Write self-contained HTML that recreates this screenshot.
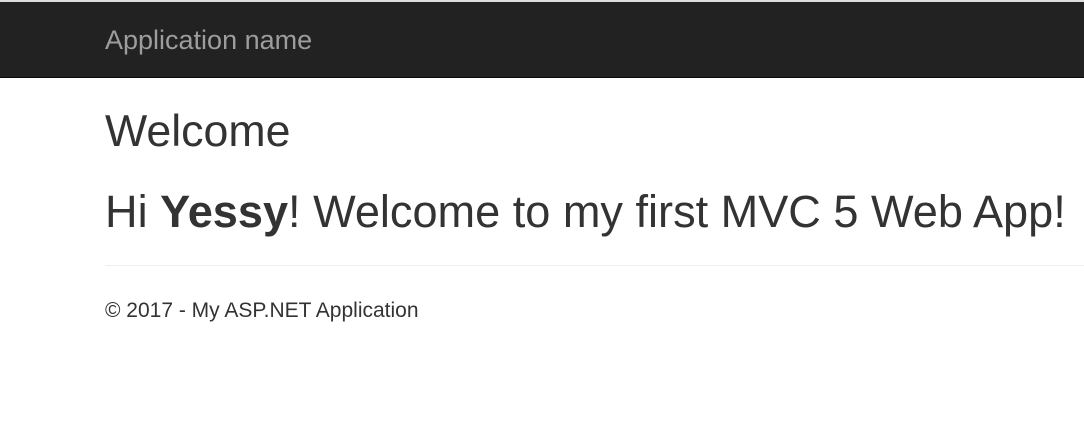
<!DOCTYPE html>
<html><head><style>
body{margin:0;background:#fff;font-family:"Liberation Sans",Arial,sans-serif;color:#333;width:1084px;height:425px;overflow:hidden;position:relative}
.top{position:absolute;left:0;top:0;width:1084px;height:2px;background:#ddd}
.nav{position:absolute;left:0;top:2px;width:1084px;height:75px;background:#222;border-bottom:1px solid #080808}
.brand{position:absolute;left:105px;top:22px;font-size:27px;line-height:32px;color:#9d9d9d}
.t{position:absolute;left:105px;white-space:nowrap}
.h2{top:107px;font-size:44.7px;line-height:50px}
.h1{top:184px;font-size:45.1px;line-height:56px}
hr{position:absolute;left:105px;top:265px;width:990px;margin:0;border:0;border-top:1px solid #eee}
.f{top:298px;font-size:21px;line-height:26px}
</style></head><body>
<div class="top"></div>
<div class="nav"><div class="brand">Application name</div></div>
<div class="t h2">Welcome</div>
<div class="t h1">Hi <b>Yessy</b>! Welcome to my first MVC 5 Web App!</div>
<hr>
<div class="t f">© 2017 - My ASP.NET Application</div>
</body></html>
